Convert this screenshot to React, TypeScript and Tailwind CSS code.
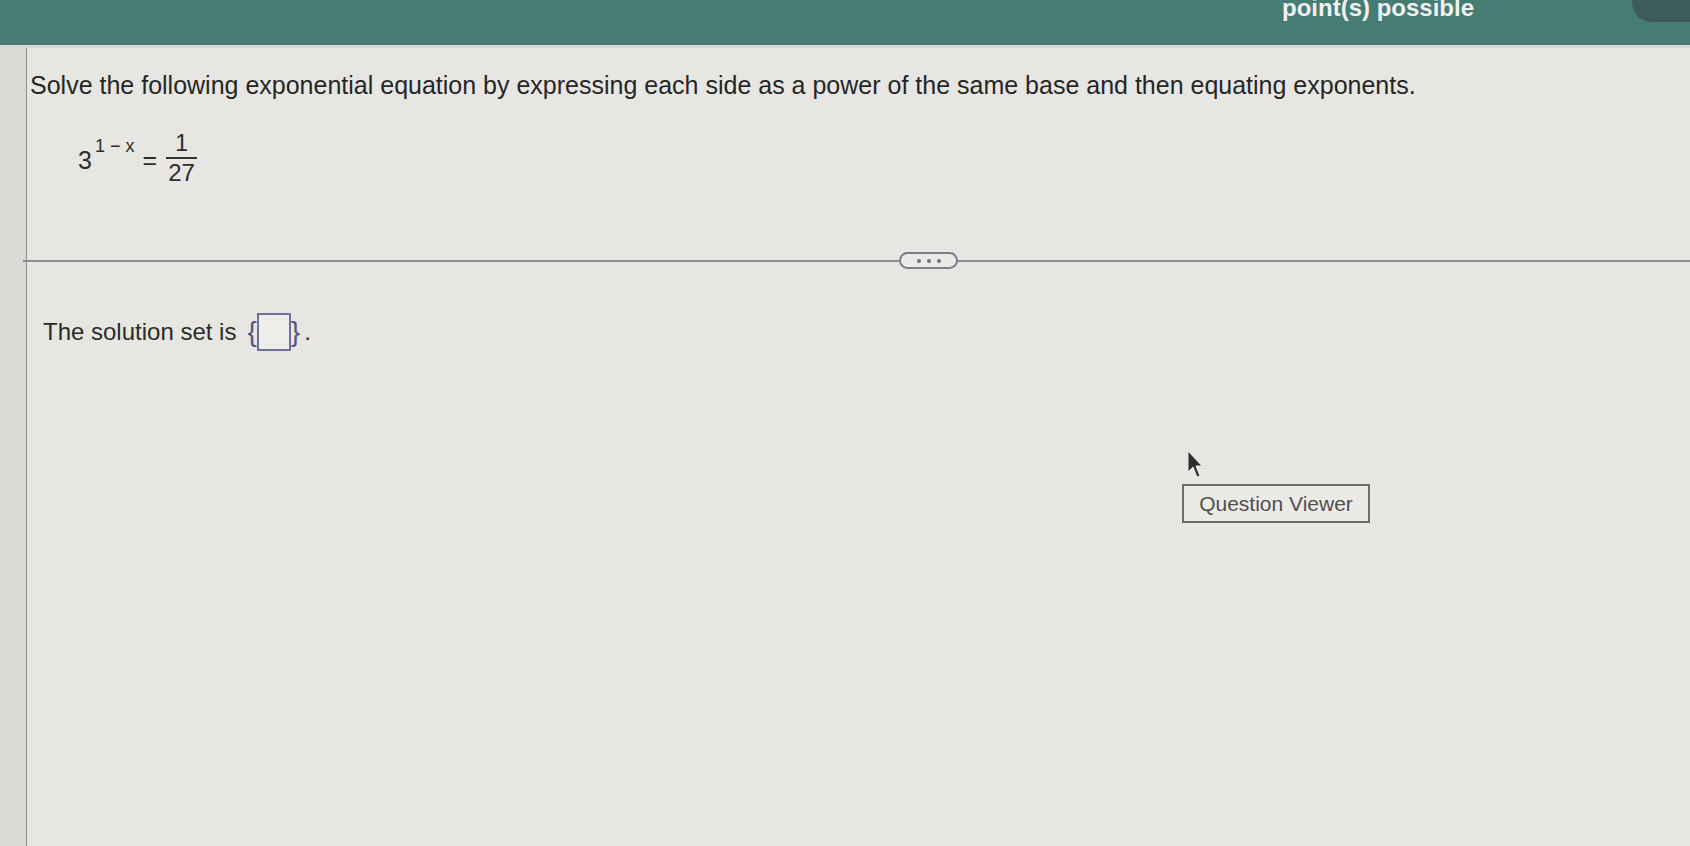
import React from 'react';

const Cursor = () => (
  <svg width="18" height="30" viewBox="0 0 18 30" className="absolute left-[1186px] top-[449px]">
    <path d="M2 2 L2 23 L7 18 L11 28 L14 27 L10 17 L16 17 Z" fill="#2b2f33" stroke="#e8e8e4" strokeWidth="1" />
  </svg>
);

export default function App() {
  return (
    <div
      className="relative h-[846px] w-[1690px] overflow-hidden bg-[#e6e5e1] text-[#2b2b2b]"
      style={{ fontFamily: '"Liberation Sans", Arial, sans-serif' }}
    >
      {/* Header bar */}
      <header className="relative h-[48px] bg-[#467c73] border-b-[3px] border-[#d3d6d3]">
        <span className="absolute left-[1282px] top-[-10px] text-[24px] font-bold text-[#eef2f0]">point(s) possible</span>
        <div className="absolute right-[-40px] top-[-20px] h-[42px] w-[98px] rounded-[20px] bg-[#3d5b59]" />
      </header>

      <div className="flex h-[798px]">
        {/* Left strip */}
        <div className="w-[27px] shrink-0 border-r border-[#8a8c90] bg-[#d9d9d5]" />

        {/* Content */}
        <main className="relative flex-1 bg-[#e7e6e2]">
          <p className="pl-[3px] pt-[22px] text-[25px] leading-[30px] text-[#262626]">
            Solve the following exponential equation by expressing each side as a power of the same base and then equating exponents.
          </p>

          {/* Equation */}
          <div className="ml-[51px] mt-[31px] flex items-center text-[#2d2d2d]">
            <span className="text-[25px] leading-none pt-[2px]">3</span>
            <span className="text-[18px] leading-none -mt-[26px] ml-[3px]">1 − x</span>
            <span className="text-[25px] leading-none ml-[8px] mr-[9px] pt-[2px]">=</span>
            <span className="flex flex-col items-center">
              <span className="text-[23px] leading-[24px] pb-[2px]">1</span>
              <span className="h-[2px] w-[31px] bg-[#333]" />
              <span className="text-[24px] leading-[28px]">27</span>
            </span>
          </div>

          {/* Separator */}
          <div className="-ml-[4px] mt-[65px] flex items-center">
            <div className="h-[2px] w-[876px] bg-[#8c8d95]" />
            <div className="flex h-[17px] w-[59px] items-center justify-center gap-[6px] rounded-full border-2 border-[#7c7d88] bg-[#ebeae6]">
              <span className="h-[4px] w-[4px] rounded-full bg-[#6f707c]" />
              <span className="h-[4px] w-[4px] rounded-full bg-[#6f707c]" />
              <span className="h-[4px] w-[4px] rounded-full bg-[#6f707c]" />
            </div>
            <div className="h-[2px] flex-1 bg-[#8c8d95]" />
          </div>

          {/* Answer */}
          <div className="ml-[16px] mt-[44px] flex items-center text-[24px] text-[#2b2b2b]">
            <span>The solution set is</span>
            <span className="ml-[11px] text-[28px] leading-none text-[#55557a]">{'{'}</span>
            <span className="h-[38px] w-[34px] border-2 border-[#7070a0] bg-[#eeede9]" />
            <span className="text-[28px] leading-none text-[#55557a]">{'}'}</span>
            <span className="ml-[4px]">.</span>
          </div>

          {/* Question Viewer */}
          <div className="ml-[1155px] mt-[133px] flex h-[39px] w-[188px] items-center justify-center border-2 border-[#6c6c6c] bg-[#eceae6] text-[21px] text-[#505050]">
            Question Viewer
          </div>
        </main>
      </div>
      <Cursor />
    </div>
  );
}
